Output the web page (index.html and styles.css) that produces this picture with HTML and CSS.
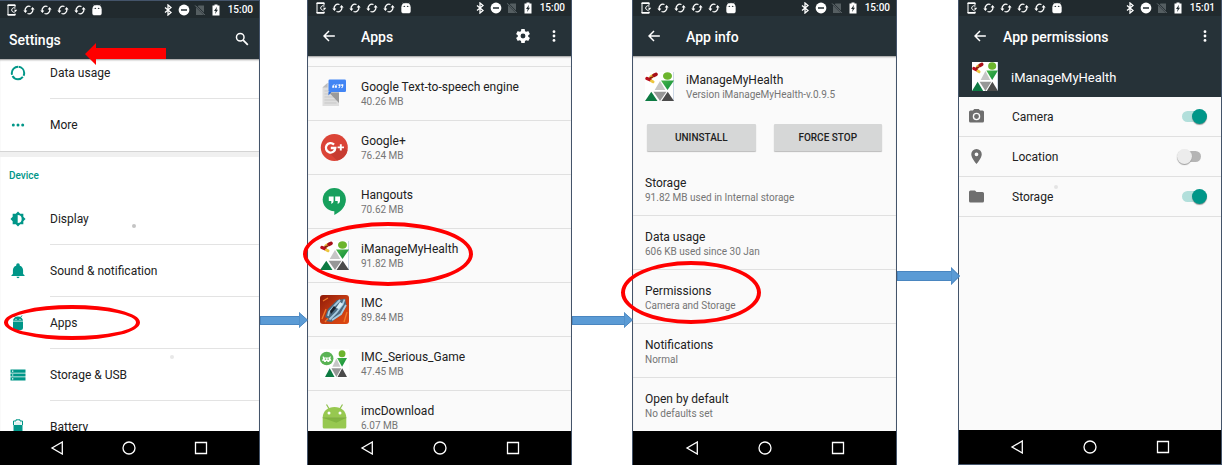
FILE: index.html
```html
<!DOCTYPE html>
<html lang="en">
<head>
<meta charset="utf-8">
<title>App permission settings</title>
<link rel="stylesheet" href="styles.css">
</head>
<body>
<svg class="sprite" aria-hidden="true">
  <defs>
    <linearGradient id="fire" x1="0" y1="0" x2="1" y2="1"><stop offset="0" stop-color="#8e1a08"/><stop offset=".5" stop-color="#c23a12"/><stop offset="1" stop-color="#e04a12"/></linearGradient>
    <linearGradient id="leaf" x1="0" y1="0" x2="1" y2="1"><stop offset="0" stop-color="#49b649"/><stop offset="1" stop-color="#0b8a3c"/></linearGradient>
  </defs>
  <symbol id="s-phone" viewBox="0 0 12 12"><path d="M9 3.500V1H2v10h7V9.500" fill="none" stroke="#fff" stroke-width="1"/><path d="M1.500 1.200h8M1.500 10.800h8" stroke="#fff" stroke-width="1.600"/><path d="M9.300 4.300A2.200 2.200 0 1 0 9.300 7.700" fill="none" stroke="#fff" stroke-width="1"/><path d="M8 5.800h3.200L9.600 8z" fill="#fff"/></symbol>
  <symbol id="s-sync" viewBox="0 0 12 12"><path d="M2.300 7.300A3.900 3.900 0 0 1 7.500 2.500M9.700 4.700A3.900 3.900 0 0 1 4.500 9.500" fill="none" stroke="#fff" stroke-width="1.300"/><path d="M.3 6.600h4L2.500 9zM7.700 5.400h4L9.500 3z" fill="#fff"/></symbol>
  <symbol id="s-droid" viewBox="0 0 12 12"><path d="M1.600 4.800h8.800v4.700a1.500 1.500 0 0 1-1.500 1.500H3.100a1.500 1.500 0 0 1-1.500-1.500zM1.800 4.500a4 3 0 0 1 8.400 0zM2.600.7l1.300 1.700M9.400.7L8.100 2.400" fill="#fff" stroke="#fff" stroke-width=".5"/><circle cx="4.300" cy="4.400" r=".7" fill="#222c30"/><circle cx="7.700" cy="4.400" r=".7" fill="#222c30"/></symbol>
  <symbol id="s-bt" viewBox="0 0 12 12"><path d="M3 3.500l6 5L6 11V1l3 2.500-6 5" fill="none" stroke="#fff" stroke-width="1.300"/></symbol>
  <symbol id="s-dnd" viewBox="0 0 12 12"><circle cx="6" cy="6" r="5.400" fill="#fff"/><path d="M3 6h6" stroke="#222c30" stroke-width="1.500"/></symbol>
  <symbol id="s-sim" viewBox="0 0 12 12"><path d="M4.500 1.500H10V11H2V4z" fill="#555e61"/><path d="M1 1l10 10" stroke="#222c30" stroke-width="1.800"/><path d="M1.200 1.500l9.500 9.500" stroke="#6c7477" stroke-width="1"/></symbol>
  <symbol id="s-batt" viewBox="0 0 12 12"><path d="M2.500 1.500h2V.5h3v1h2v10h-7z" fill="#fff"/><path d="M7 2.800L4 6.900h1.700L5 10l3-4.200H6.400z" fill="#222c30"/></symbol>
  <symbol id="i-back" viewBox="0 0 24 24"><path d="M22 12H4M12 3.500L3.500 12l8.500 8.500" fill="none" stroke="#fff" stroke-width="2.500"/></symbol>
  <symbol id="i-search" viewBox="0 0 24 24"><circle cx="9" cy="9" r="6.500" fill="none" stroke="#fff" stroke-width="2.500"/><path d="M14 14l8 8" stroke="#fff" stroke-width="3"/></symbol>
  <symbol id="i-more" viewBox="0 0 24 24"><circle cx="12" cy="4.500" r="2.400" fill="#fff"/><circle cx="12" cy="12" r="2.400" fill="#fff"/><circle cx="12" cy="19.500" r="2.400" fill="#fff"/></symbol>
  <symbol id="i-gear" viewBox="2 2 20 20"><path fill="#fff" d="M19.430 12.980c.04-.32.07-.64.07-.98s-.03-.66-.07-.98l2.110-1.650c.19-.15.24-.42.12-.64l-2-3.460c-.12-.22-.39-.3-.61-.22l-2.490 1c-.52-.4-1.080-.73-1.690-.98l-.38-2.650C14.460 2.180 14.250 2 14 2h-4c-.25 0-.46.18-.49.420l-.38 2.650c-.61.250-1.170.590-1.690.980l-2.490-1c-.23-.09-.49 0-.61.220l-2 3.460c-.13.220-.07.490.12.640l2.110 1.650c-.04.320-.07.650-.07.980s.03.660.07.980l-2.110 1.650c-.19.150-.24.420-.12.640l2 3.460c.12.220.39.300.61.220l2.490-1c.52.400 1.080.730 1.690.980l.38 2.650c.03.240.24.420.49.420h4c.25 0 .46-.18.490-.42l.38-2.650c.61-.25 1.170-.59 1.690-.98l2.490 1c.23.090.49 0 .61-.22l2-3.460c.12-.22.07-.49-.12-.64zM12 15.500A3.500 3.500 0 1 1 12 8.500a3.500 3.500 0 0 1 0 7z"/></symbol>
  <symbol id="i-usage" viewBox="0 0 16 16"><circle cx="8" cy="8" r="6.200" fill="none" stroke="#009688" stroke-width="2" stroke-dasharray="11.800 1.200" stroke-dashoffset="-.6" transform="rotate(-90 8 8)"/></symbol>
  <symbol id="i-dots" viewBox="0 0 16 16"><g fill="#009688"><circle cx="3.300" cy="8" r="1.500"/><circle cx="8" cy="8" r="1.500"/><circle cx="12.700" cy="8" r="1.500"/></g></symbol>
  <symbol id="i-display" viewBox="0 0 24 24"><path fill="#009688" d="M20 8.690V4h-4.690L12 .690 8.690 4H4v4.690L.690 12 4 15.310V20h4.690L12 23.310 15.310 20H20v-4.690L23.310 12z"/><path d="M11.500 6a6 6 0 0 1 0 12z" fill="#fff"/></symbol>
  <symbol id="i-bell" viewBox="2 1 20 22"><path fill="#009688" d="M12 22c1.100 0 2-.9 2-2h-4a2 2 0 0 0 2 2zm7-6v-5c0-3.070-1.640-5.640-4.500-6.320V4a2.500 2.500 0 1 0-5 0v.680C6.630 5.360 5 7.920 5 11v5l-2 2v1h18v-1z"/></symbol>
  <symbol id="i-droid" viewBox="0 0 16 16"><path fill="#009688" d="M3 6.500h10V13a2 2 0 0 1-2 2H5a2 2 0 0 1-2-2zM3 5.800a5 4.300 0 0 1 10 0z"/><path d="M4 .5l1.500 2M12 .5l-1.500 2" stroke="#009688"/><circle cx="6" cy="4.300" r=".6" fill="#fff"/><circle cx="10" cy="4.300" r=".6" fill="#fff"/></symbol>
  <symbol id="i-storage" viewBox="0 0 16 16"><path fill="#009688" d="M.5 2.500h15v3.200H.5zM.5 6.400h15v3.200H.5zM.5 10.300h15v3.200H.5z"/><path d="M2 4.100h1.300M2 8h1.300M2 11.900h1.300" stroke="#fff" stroke-width="1.200"/></symbol>
  <symbol id="i-batt" viewBox="0 0 16 16"><path d="M4.500 3h7v3h-7z" fill="#e0f2f1"/><path d="M3.500 6h9v10h-9z" fill="#009688"/><path d="M3.500 6V2H6V.8h4V2h2.500v4" fill="none" stroke="#009688" stroke-width="1"/></symbol>
  <symbol id="i-camera" viewBox="2 2 20 20"><path fill="#6e6e6e" d="M9 2L7.170 4H4a2 2 0 0 0-2 2v12a2 2 0 0 0 2 2h16a2 2 0 0 0 2-2V6a2 2 0 0 0-2-2h-3.170L15 2zm3 15a5 5 0 1 1 0-10 5 5 0 0 1 0 10z"/><circle cx="12" cy="12" r="3.200" fill="#6e6e6e"/></symbol>
  <symbol id="i-pin" viewBox="2 2 20 20"><path fill="#6e6e6e" d="M12 2a7 7 0 0 0-7 7c0 5.250 7 13 7 13s7-7.750 7-13a7 7 0 0 0-7-7zm0 9.500a2.500 2.500 0 1 1 0-5 2.500 2.500 0 0 1 0 5z"/></symbol>
  <symbol id="i-folder" viewBox="2 2 20 20"><path fill="#6e6e6e" d="M10 4H4a2 2 0 0 0-2 2v12a2 2 0 0 0 2 2h16a2 2 0 0 0 2-2V8a2 2 0 0 0-2-2h-8z"/></symbol>
  <symbol id="n-back" viewBox="0 0 14 14"><path d="M12.300 1v12L2 7z" fill="none" stroke="#fff" stroke-width="1.300"/></symbol>
  <symbol id="n-home" viewBox="0 0 14 14"><circle cx="7" cy="7" r="6" fill="none" stroke="#fff" stroke-width="1.300"/></symbol>
  <symbol id="n-recent" viewBox="0 0 14 14"><path d="M1.500 1.500h11v11h-11z" fill="none" stroke="#fff" stroke-width="1.300"/></symbol>
  <symbol id="triangles" viewBox="0 0 29 29" preserveAspectRatio="none">
    <path d="M15 9l5.300 9H9.700z" fill="#c6c6c6"/><path d="M16 8.500h13L22.500 18z" fill="url(#leaf)"/><path d="M8.500 19.700h13L15 29z" fill="#979797"/><path d="M6.300 19.700L12.500 29H0z" fill="#0d7a42"/><path d="M22.700 19.700L29 29H16.500z" fill="#4b4b4b"/><ellipse cx="22.500" cy="4" rx="4.500" ry="3.800" fill="#6cb52d"/>
  </symbol>
  <symbol id="a-health" viewBox="0 0 29 29" preserveAspectRatio="none"><path d="M0 0h29v29H0z" fill="#fff"/><path d="M28.600 0v29" stroke="#b9c8dc" stroke-width=".8"/><use href="#triangles" width="29" height="29"/>
    <path d="M6 5l2.500-1.500" stroke="#e2b93c" stroke-width="3.400" stroke-linecap="round"/><path d="M9 3.300l2-1" stroke="#a80f18" stroke-width="3.600" stroke-linecap="round"/><path d="M2 6.500l3 1.300" stroke="#b90f1b" stroke-width="3.400" stroke-linecap="round"/><path d="M6.500 9l1.500.8" stroke="#ecc63f" stroke-width="3" stroke-linecap="round"/><path d="M4.500 6.300l3.300-1.300" stroke="#8e1a10" stroke-width="1.800"/></symbol>
  <symbol id="a-game" viewBox="0 0 29 29"><path d="M0 0h29v29H0z" fill="#fff"/><use href="#triangles" x="5" y="1" width="22" height="27"/><circle cx="6.700" cy="9.500" r="6.800" fill="#59b354"/><path d="M3 7l1.300 1.500h4.800L10.400 7l.4 1.200-.5 1 1.200 2.600H9.800L9 13H7.700L7 12H6.400l-.7 1H4.300l-.7-1.200H1.900l1.200-2.600-.5-1z" fill="#fff"/><path d="M4.800 9.500h1.400v1.300H4.800zM7.400 9.500h1.400v1.300H7.400z" fill="#59b354"/></symbol>
  <symbol id="a-tts" viewBox="0 0 29 29"><path d="M7.500 4H19v23H2.500V8.500z" fill="#dedede"/><path d="M7.500 4v4.500h-5z" fill="#bcbcbc"/><path d="M4.500 12h12M4.500 15h12M4.500 18h12M4.500 21h12M4.500 24h12" stroke="#c7c7c7"/><path d="M9 13.500h10V24z" fill="#9a9a9a"/><path d="M8.500 13l-.1 3.500 3-3.500z" fill="#2b6de0"/><rect x="8.500" y=".5" width="17.500" height="12.500" rx="1.300" fill="#4285f4"/><path d="M14.700 5.200q-2.500.4-2.500 2.500v1h2v-2h-.8q0-.8 1.300-.8zM17.400 5.200q-2.500.4-2.500 2.500v1h2v-2h-.8q0-.8 1.300-.8zM18.500 5.200h2v1.500q0 2-2 2.500v-.8q1-.4 1-1.400h-1zM21.300 5.200h2v1.500q0 2-2 2.500v-.8q1-.4 1-1.400h-1z" fill="#fff"/></symbol>
  <symbol id="a-plus" viewBox="0 0 29 29"><circle cx="14.300" cy="14.500" r="13.500" fill="#db4437"/><path d="M8 18.500l9 9a13.500 13.500 0 0 0 10.500-10L23 13z" fill="#c73b31"/><path d="M14 11.600A4.700 4.700 0 1 0 15.300 15H10.800" fill="none" stroke="#fff" stroke-width="2.300"/><path d="M20.800 11.200v6.400M17.600 14.400H24" stroke="#fff" stroke-width="1.900"/></symbol>
  <symbol id="a-hang" viewBox="0 0 29 29"><circle cx="14.300" cy="12.600" r="11.600" fill="#17a05d"/><path d="M14.300 20v8c6-3 9.500-7 10.700-11z" fill="#17a05d"/><path d="M8.800 9.600h4.800v4.500q0 2-2.300 3v-3H8.800zM15.200 9.600H20v4.500q0 2-2.300 3v-3h-2.500z" fill="#fff"/></symbol>
  <symbol id="a-imc" viewBox="0 0 29 29"><rect width="29" height="29" rx="3" fill="url(#fire)"/><path d="M2 24l4-10M5 27l6-7M24 27l3-10M3 6l5-3" stroke="#f17a2b" stroke-width="1.300"/><path d="M25 3.500l1.500 7-5 9-10 7.500-5.500-1 3-2-4-2 3-8 9-9 6-1z" fill="#4b6a80"/><path d="M24.500 4.500l-2 5-6 8-7 7M20 5l-5 5-6 7-1 4M26 10l-5 9-9 6" fill="none" stroke="#a7cbe0" stroke-width="1.800"/><path d="M20 7l3 2-4 5-3-1z" fill="#d9eef7"/><path d="M14 11l2 2-5 6-1-3z" fill="#18232e"/></symbol>
  <symbol id="a-droid" viewBox="0 0 29 29"><path d="M6.500 1.500l3 5M22.500 1.500l-3 5" stroke="#8fc04d" stroke-width="1.200"/><path d="M2.700 14.500C3 7.500 8 4 14.500 4s11.500 3.500 11.800 10.500z" fill="#97c850"/><path d="M2.700 14.500h23.600V24a1.500 1.500 0 0 1-1.500 1.500H4.200A1.500 1.500 0 0 1 2.700 24z" fill="#97c850"/><path d="M2.700 14.800h23.600l-10 5z" fill="#82b541"/><path d="M2.700 14.700h23.600" stroke="#78a93a" stroke-width=".7"/><circle cx="9" cy="10" r="1.500" fill="#fff"/><circle cx="20" cy="10" r="1.500" fill="#fff"/></symbol>
</svg>

<main class="flow">
  <section class="phone phone-settings">
    <div class="status">
      <svg><use href="#s-phone"/></svg><svg><use href="#s-sync"/></svg><svg><use href="#s-sync"/></svg><svg><use href="#s-sync"/></svg><svg><use href="#s-sync"/></svg><svg><use href="#s-droid"/></svg>
      <span class="status-right"><svg><use href="#s-bt"/></svg><svg><use href="#s-dnd"/></svg><svg><use href="#s-sim"/></svg><svg><use href="#s-batt"/></svg><time>15:00</time></span>
    </div>
    <header class="bar">
      <h1>Settings</h1>
      <button class="icon-btn" aria-label="Search"><svg><use href="#i-search"/></svg></button>
    </header>
    <div class="screen">
      <ul class="settings scrolled">
        <li><a href="#"><svg><use href="#i-usage"/></svg><span>Data usage</span></a></li>
        <li><a href="#"><svg><use href="#i-dots"/></svg><span>More</span></a></li>
      </ul>
      <h2>Device</h2>
      <ul class="settings">
        <li><a href="#"><svg><use href="#i-display"/></svg><span>Display</span></a></li>
        <li><a href="#"><svg><use href="#i-bell"/></svg><span>Sound &amp; notification</span></a></li>
        <li><a href="#"><svg><use href="#i-droid"/></svg><span>Apps</span></a></li>
        <li><a href="#"><svg><use href="#i-storage"/></svg><span>Storage &amp; USB</span></a></li>
        <li><a href="#"><svg><use href="#i-batt"/></svg><span>Battery</span></a></li>
      </ul>
    </div>
    <nav class="nav"><button aria-label="Back"><svg><use href="#n-back"/></svg></button><button aria-label="Home"><svg><use href="#n-home"/></svg></button><button aria-label="Recent apps"><svg><use href="#n-recent"/></svg></button></nav>
    <svg class="red-arrow" viewBox="0 0 81 22"><path d="M0 11L11 0v5h70v11H11v6z" fill="#f00"/></svg>
    <span class="ring ring-apps"></span>
    <i class="speck speck-a"></i><i class="speck speck-b"></i>
  </section>

  <div class="connector"><span class="shaft"></span><svg viewBox="0 0 9 16"><path d="M0 .5L8.500 8 0 15.500z"/></svg></div>

  <section class="phone">
    <div class="status">
      <svg><use href="#s-phone"/></svg><svg><use href="#s-sync"/></svg><svg><use href="#s-sync"/></svg><svg><use href="#s-sync"/></svg><svg><use href="#s-sync"/></svg><svg><use href="#s-droid"/></svg>
      <span class="status-right"><svg><use href="#s-bt"/></svg><svg><use href="#s-dnd"/></svg><svg><use href="#s-sim"/></svg><svg><use href="#s-batt"/></svg><time>15:00</time></span>
    </div>
    <header class="bar with-back">
      <button class="icon-btn back" aria-label="Back"><svg><use href="#i-back"/></svg></button>
      <h1>Apps</h1>
      <button class="icon-btn" aria-label="Settings"><svg><use href="#i-gear"/></svg></button>
      <button class="icon-btn" aria-label="More options"><svg><use href="#i-more"/></svg></button>
    </header>
    <div class="screen grey">
      <ul class="apps">
        <li><a href="#"><svg><use href="#a-tts"/></svg><span>Google Text-to-speech engine<small>40.26 MB</small></span></a></li>
        <li><a href="#"><svg><use href="#a-plus"/></svg><span>Google+<small>76.24 MB</small></span></a></li>
        <li><a href="#"><svg><use href="#a-hang"/></svg><span>Hangouts<small>70.62 MB</small></span></a></li>
        <li><a href="#"><svg><use href="#a-health"/></svg><span>iManageMyHealth<small>91.82 MB</small></span></a></li>
        <li><a href="#"><svg><use href="#a-imc"/></svg><span>IMC<small>89.84 MB</small></span></a></li>
        <li><a href="#"><svg><use href="#a-game"/></svg><span>IMC_Serious_Game<small>47.45 MB</small></span></a></li>
        <li><a href="#"><svg><use href="#a-droid"/></svg><span>imcDownload<small>6.07 MB</small></span></a></li>
      </ul>
    </div>
    <nav class="nav"><button aria-label="Back"><svg><use href="#n-back"/></svg></button><button aria-label="Home"><svg><use href="#n-home"/></svg></button><button aria-label="Recent apps"><svg><use href="#n-recent"/></svg></button></nav>
    <span class="ring ring-health"></span>
  </section>

  <div class="connector"><span class="shaft"></span><svg viewBox="0 0 9 16"><path d="M0 .5L8.500 8 0 15.500z"/></svg></div>

  <section class="phone">
    <div class="status">
      <svg><use href="#s-phone"/></svg><svg><use href="#s-sync"/></svg><svg><use href="#s-sync"/></svg><svg><use href="#s-sync"/></svg><svg><use href="#s-sync"/></svg><svg><use href="#s-droid"/></svg>
      <span class="status-right"><svg><use href="#s-bt"/></svg><svg><use href="#s-dnd"/></svg><svg><use href="#s-sim"/></svg><svg><use href="#s-batt"/></svg><time>15:00</time></span>
    </div>
    <header class="bar with-back">
      <button class="icon-btn back" aria-label="Back"><svg><use href="#i-back"/></svg></button>
      <h1>App info</h1>
    </header>
    <div class="screen grey">
      <div class="app-head"><svg><use href="#a-health"/></svg><p>iManageMyHealth<small>Version iManageMyHealth-v.0.9.5</small></p></div>
      <div class="actions"><button>UNINSTALL</button><button>FORCE STOP</button></div>
      <ul class="prefs">
        <li><a href="#">Storage<small>91.82 MB used in Internal storage</small></a></li>
        <li><a href="#">Data usage<small>606 KB used since 30 Jan</small></a></li>
        <li><a href="#">Permissions<small>Camera and Storage</small></a></li>
        <li><a href="#">Notifications<small>Normal</small></a></li>
        <li><a href="#">Open by default<small>No defaults set</small></a></li>
      </ul>
    </div>
    <nav class="nav"><button aria-label="Back"><svg><use href="#n-back"/></svg></button><button aria-label="Home"><svg><use href="#n-home"/></svg></button><button aria-label="Recent apps"><svg><use href="#n-recent"/></svg></button></nav>
    <span class="ring ring-perms"></span>
  </section>

  <div class="connector connector-high"><span class="shaft"></span><svg viewBox="0 0 9 16" preserveAspectRatio="none"><path d="M0 .5L8.500 8 0 15.500z"/></svg></div>

  <section class="phone phone-perms">
    <div class="status">
      <svg><use href="#s-phone"/></svg><svg><use href="#s-sync"/></svg><svg><use href="#s-sync"/></svg><svg><use href="#s-sync"/></svg><svg><use href="#s-sync"/></svg><svg><use href="#s-droid"/></svg>
      <span class="status-right"><svg><use href="#s-bt"/></svg><svg><use href="#s-dnd"/></svg><svg><use href="#s-sim"/></svg><svg><use href="#s-batt"/></svg><time>15:01</time></span>
    </div>
    <header class="bar with-back">
      <button class="icon-btn back" aria-label="Back"><svg><use href="#i-back"/></svg></button>
      <h1>App permissions</h1>
      <button class="icon-btn" aria-label="More options"><svg><use href="#i-more"/></svg></button>
    </header>
    <div class="subhead"><svg><use href="#a-health"/></svg><span>iManageMyHealth</span></div>
    <div class="screen grey">
      <ul class="perms">
        <li><svg><use href="#i-camera"/></svg><label for="camera">Camera</label><input type="checkbox" role="switch" id="camera" checked></li>
        <li><svg><use href="#i-pin"/></svg><label for="location">Location</label><input type="checkbox" role="switch" id="location"></li>
        <li><svg><use href="#i-folder"/></svg><label for="storage">Storage</label><input type="checkbox" role="switch" id="storage" checked></li>
      </ul>
    </div>
    <nav class="nav"><button aria-label="Back"><svg><use href="#n-back"/></svg></button><button aria-label="Home"><svg><use href="#n-home"/></svg></button><button aria-label="Recent apps"><svg><use href="#n-recent"/></svg></button></nav>
    <i class="speck speck-c"></i>
  </section>
</main>
</body>
</html>
```
FILE: styles.css
```css
* { box-sizing: border-box; }
body { margin: 0; background: #fff; color: #212121; font: 12px/15px Roboto, "Liberation Sans", sans-serif; }
ul, h1, h2, p { margin: 0; padding: 0; list-style: none; }
a { color: inherit; text-decoration: none; }
button { padding: 0; border: 0; background: none; font: inherit; color: inherit; }
small { display: block; font-size: 10px; line-height: 14px; color: #757575; }
svg { display: block; flex: none; }
.sprite { position: absolute; width: 0; height: 0; }

.flow {
  display: grid;
  grid-template-columns: minmax(0, 260fr) minmax(0, 47fr) minmax(0, 265fr) minmax(0, 60fr) minmax(0, 265fr) minmax(0, 61fr) minmax(0, 264fr);
  height: 100vh;
}
.phone {
  position: relative;
  display: flex;
  flex-direction: column;
  min-height: 0;
  border: 0 solid #44546a;
  border-width: 0 1px;
}
.phone-settings { border-width: 1px 1px 0 0; }
.phone-perms { border-bottom-width: 1px; }

.status {
  display: flex;
  align-items: center;
  gap: 5px;
  flex: none;
  height: 16px;
  padding: 0 6px 0 7px;
  background: #212a2e;
  color: #fff;
}
.status svg { width: 12px; height: 12px; }
.status-right { display: flex; align-items: center; gap: 4px; margin-left: auto; }
.status time { margin-left: 2px; font-size: 10px; line-height: 14px; font-weight: 500; }

.bar {
  display: flex;
  align-items: center;
  gap: 17px;
  flex: none;
  height: 40px;
  padding: 0 10px;
  background: #263238;
  color: #fff;
}
.bar h1 { flex: 1; padding-top: 2px; font-size: 14px; line-height: 20px; font-weight: 500; }
.icon-btn svg { width: 14px; height: 14px; }
.back { margin: 0 8px 0 4px; }
.phone-settings .status { height: 17px; padding-left: 6px; }
.phone-settings .bar { height: 41px; padding-left: 9px; }
.phone-perms .bar { padding-right: 9px; }
.phone-perms .back { margin-right: -1px; }

.screen {
  flex: 1;
  min-height: 0;
  overflow: hidden;
  background: #fff;
  box-shadow: inset 0 2px 2px -1px #999;
}
.grey { background: #fafafa; }
.phone-perms .screen { box-shadow: none; }

.settings li { height: 52px; }
.settings a { display: flex; align-items: center; gap: 24px; height: 100%; padding-left: 10px; }
.settings svg { width: 16px; height: 16px; }
.settings span { flex: 1; display: flex; align-items: center; height: 52px; padding-top: 1px; border-bottom: 1px solid #e3e3e3; }
.settings li:last-child span { border: 0; }
.scrolled { margin-top: -12px; border-bottom: 1px solid #d4d4d4; }
.screen h2 { height: 41px; padding: 11px 9px 0; border-top: 5px solid #f0f0f0; font-size: 10px; line-height: 15px; font-weight: 500; color: #009688; }

.apps { padding-top: 10px; }
.apps li { height: 54px; border-top: 1px solid #e0e0e0; }
.apps a { display: flex; align-items: center; gap: 12px; height: 100%; padding-left: 12px; }
.apps span { padding-top: 2px; }
.apps svg, .app-head svg { width: 29px; height: 29px; }

.app-head { display: flex; align-items: center; gap: 12px; padding: 14px 12px 0; }
.app-head p { padding-top: 3px; }
.actions { display: flex; gap: 18px; padding: 22px 14px 11px; }
.actions button { flex: 1; height: 27px; border-radius: 1px; background: #d6d7d7; box-shadow: 0 1px 1px #bbb; font-size: 10px; font-weight: 500; }
.prefs li { height: 54px; padding: 14px 12px 0; border-bottom: 1px solid #e0e0e0; }
.prefs li:last-child { border: 0; }
.prefs a { display: block; }

.subhead { display: flex; align-items: center; gap: 13px; flex: none; height: 41px; padding: 0 13px; background: #263238; color: #fff; font-size: 13px; }
.subhead span { padding-top: 2px; }
.subhead svg { width: 26px; height: 29px; }
.perms li { display: flex; align-items: center; gap: 28px; height: 40px; padding: 0 14px 0 10px; border-bottom: 1px solid #e0e0e0; }
.perms svg { width: 15px; height: 15px; }
.perms label { flex: 1; padding-top: 2px; }
.perms input { position: relative; appearance: none; width: 30px; height: 15px; margin: 0; }
.perms input::before { content: ""; position: absolute; inset: 2px 6px 2px 5px; border-radius: 6px; background: #b5b5b5; }
.perms input::after { content: ""; position: absolute; left: 0; top: 0; width: 15px; height: 15px; border-radius: 50%; background: #ececec; box-shadow: 0 1px 1px #999; }
.perms input:checked::before { background: #b2dfdb; }
.perms input:checked::after { left: auto; right: 0; background: #009688; }

.nav { display: flex; align-items: center; justify-content: center; gap: 49px; flex: none; height: 34px; background: #000; }
.phone-settings .nav { gap: 48px; padding-right: 2px; }
.nav button { display: flex; justify-content: center; width: 24px; }
.nav svg { width: 14px; height: 14px; }

.connector { position: relative; z-index: 1; display: flex; align-items: center; align-self: start; height: 16px; margin: 312px -1px 0 0; }
.shaft { flex: 1; height: 9px; border: 1px solid #4a86c0; border-right: 0; background: #5b9bd5; }
.connector svg { width: 9px; height: 16px; }
.connector path { fill: #5b9bd5; stroke: #4a86c0; }
.connector-high { height: 18px; margin: 267px -2px 0 0; }
.connector-high .shaft { height: 10px; }
.connector-high svg { height: 18px; }

.ring { position: absolute; border: 4px solid #f00; border-radius: 50%; pointer-events: none; }
.ring-apps { left: 4px; top: 304px; width: 136px; height: 35px; }
.ring-health { left: -5px; top: 222px; width: 170px; height: 64px; z-index: 2; }
.ring-perms { left: -12px; top: 261px; width: 140px; height: 63px; z-index: 2; }
.red-arrow { position: absolute; left: 85px; top: 42px; width: 81px; height: 22px; }
.speck { position: absolute; width: 4px; height: 4px; border-radius: 50%; background: #c4c4c4; }
.speck-a { left: 132px; top: 223px; }
.speck-b { left: 170px; top: 354px; background: #e8e8e8; }
.speck-c { left: 95px; top: 185px; background: #e4e4e4; }
```
